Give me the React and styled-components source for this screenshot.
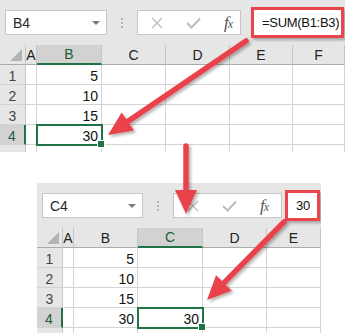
import React from "react";
import styled, { createGlobalStyle } from "styled-components";

const GREEN = "#217346";
const RED = "#e9434b";

const GlobalStyle = createGlobalStyle`
  html, body { margin: 0; padding: 0; background: #fff; }
  body { font-family: "Liberation Sans", Arial, sans-serif; }
  * { box-sizing: border-box; }
`;

const Canvas = styled.div`
  position: relative;
  width: 345px;
  height: 333px;
  overflow: hidden;
  background: #fff;
  display: flex;
  flex-direction: column;
`;

const Sheet = styled.div`
  flex-shrink: 0;
  width: ${p => p.$width}px;
  height: ${p => p.$height}px;
  margin-left: ${p => p.$left || 0}px;
  margin-top: ${p => p.$top || 0}px;
  background: #e6e6e6;
  overflow: hidden;
`;

const FormulaBar = styled.div`
  display: flex;
  align-items: center;
  height: 45px;
  padding-left: 5px;
`;

const NameBox = styled.div`
  display: flex;
  align-items: center;
  justify-content: space-between;
  width: ${p => p.$width}px;
  height: 25px;
  padding: 0 6px 0 7px;
  background: #fff;
  border: 1px solid #c6c6c6;
  font-size: 14px;
  color: #262626;
`;

const Caret = styled.span`
  width: 0;
  height: 0;
  border-left: 4px solid transparent;
  border-right: 4px solid transparent;
  border-top: 4px solid #7a7a7a;
`;

const Dots = styled.div`
  display: flex;
  flex-direction: column;
  gap: 2px;
  margin-left: 14px;
  span {
    width: 2px;
    height: 2px;
    background: #b3b3b3;
  }
`;

const FxBox = styled.div`
  display: flex;
  align-items: center;
  gap: 23px;
  width: ${p => p.$width}px;
  height: 25px;
  margin-left: 14px;
  padding-left: 13px;
  background: #fff;
  border: 1px solid #c6c6c6;
`;

const Fx = styled.span`
  font-family: "Liberation Serif", "Times New Roman", serif;
  font-style: italic;
  font-size: 17px;
  line-height: 1;
  color: #555;
  letter-spacing: -1px;
  small { font-size: 12px; }
`;

const Callout = styled.div`
  display: flex;
  align-items: center;
  width: ${p => p.$width}px;
  height: 31px;
  margin-left: ${p => p.$gap}px;
  padding-left: 8px;
  background: #fff;
  border: 3px solid ${RED};
  box-shadow: 2px 2px 3px rgba(0, 0, 0, 0.3);
  font-size: 13px;
  letter-spacing: -0.3px;
  color: #111;
  white-space: nowrap;
`;

const Grid = styled.div`
  display: grid;
  grid-template-columns: ${p => p.$cols};
  grid-auto-rows: 20px;
  background: #fff;
  font-size: 14px;
`;

const Corner = styled.div`
  position: relative;
  background: #e6e6e6;
  border-right: 1px solid #c6c6c6;
  border-bottom: 1px solid #ababab;
  &::after {
    content: "";
    position: absolute;
    right: 3px;
    bottom: 3px;
    border-style: solid;
    border-width: 0 0 12px 12px;
    border-color: transparent transparent #b4b4b4 transparent;
  }
`;

const ColHead = styled.div`
  display: flex;
  align-items: center;
  justify-content: center;
  background: ${p => (p.$active ? "#d2d2d2" : "#e6e6e6")};
  border-right: 1px solid #c6c6c6;
  border-bottom: ${p => (p.$active ? `2px solid ${GREEN}` : "1px solid #ababab")};
  color: ${p => (p.$active ? "#1d5e3a" : "#222")};
  white-space: nowrap;
`;

const RowHead = styled.div`
  display: flex;
  align-items: flex-end;
  justify-content: center;
  line-height: 1;
  padding-bottom: 1px;
  background: ${p => (p.$active ? "#d2d2d2" : "#e6e6e6")};
  border-right: ${p => (p.$active ? `2px solid ${GREEN}` : "1px solid #c6c6c6")};
  border-bottom: 1px solid #d4d4d4;
  color: ${p => (p.$active ? "#1d5e3a" : "#444")};
`;

const Cell = styled.div`
  position: relative;
  display: flex;
  align-items: flex-end;
  justify-content: flex-end;
  line-height: 1;
  padding: 0 3px 1px 0;
  border-right: 1px solid #d4d4d4;
  border-bottom: 1px solid #d4d4d4;
  color: #111;
  ${p =>
    p.$selected &&
    `
    z-index: 1;
    outline: 2px solid ${GREEN};
    outline-offset: -1px;
    &::after {
      content: "";
      position: absolute;
      right: -4px;
      bottom: -4px;
      width: 6px;
      height: 6px;
      background: ${GREEN};
      border: 1px solid #fff;
    }
  `}
`;

const Overlay = styled.svg`
  position: absolute;
  left: 0;
  top: 0;
  pointer-events: none;
`;

const XIcon = () => (
  <svg width="12" height="12" viewBox="0 0 12 12">
    <path d="M1 1 L11 11 M11 1 L1 11" stroke="#bdbdbd" strokeWidth="1.3" fill="none" />
  </svg>
);

const CheckIcon = () => (
  <svg width="15" height="12" viewBox="0 0 15 12">
    <path d="M1 6 L5.5 10.5 L14 1.5" stroke="#bdbdbd" strokeWidth="2" fill="none" />
  </svg>
);

function Arrow({ x1, y1, x2, y2 }) {
  const dx = x2 - x1;
  const dy = y2 - y1;
  const len = Math.hypot(dx, dy);
  const ux = dx / len;
  const uy = dy / len;
  const head = 24;
  const half = 11;
  const bx = x2 - ux * head;
  const by = y2 - uy * head;
  const px = -uy;
  const py = ux;
  const pts = [
    [x2, y2],
    [bx + px * half, by + py * half],
    [bx - px * half, by - py * half],
  ]
    .map(p => p.join(","))
    .join(" ");
  return (
    <g filter="url(#shadow)">
      <line x1={x1} y1={y1} x2={bx + ux * 2} y2={by + uy * 2} stroke={RED} strokeWidth="5.5" strokeLinecap="round" />
      <polygon points={pts} fill={RED} />
    </g>
  );
}

// the last row is only partly on screen, so it gets no label
function Spreadsheet({ widths, letters, rows, sel, name, nameWidth, fxWidth, gap, calloutWidth, formula }) {
  return (
    <>
      <FormulaBar>
        <NameBox $width={nameWidth}>
          {name}
          <Caret />
        </NameBox>
        <Dots>
          <span />
          <span />
          <span />
        </Dots>
        <FxBox $width={fxWidth}>
          <XIcon />
          <CheckIcon />
          <Fx>
            f<small>x</small>
          </Fx>
        </FxBox>
        <Callout $gap={gap} $width={calloutWidth}>
          {formula}
        </Callout>
      </FormulaBar>
      <Grid $cols={widths.map(w => w + "px").join(" ")}>
        <Corner />
        {letters.map(l => (
          <ColHead key={l} $active={l === sel.col}>
            {l}
          </ColHead>
        ))}
        {rows.map((r, i) => (
          <React.Fragment key={i}>
            <RowHead $active={i + 1 === sel.row}>{i < rows.length - 1 ? i + 1 : ""}</RowHead>
            {letters.map(l => (
              <Cell key={l} $selected={l === sel.col && i + 1 === sel.row}>
                {r[l]}
              </Cell>
            ))}
          </React.Fragment>
        ))}
      </Grid>
    </>
  );
}

export default function App() {
  return (
    <Canvas>
      <GlobalStyle />
      <Sheet $width={345} $height={152}>
        <Spreadsheet
          widths={[26, 11, 65, 64, 64, 63, 52]}
          letters={["A", "B", "C", "D", "E", "F"]}
          rows={[{ B: 5 }, { B: 10 }, { B: 15 }, { B: 30 }, {}]}
          sel={{ col: "B", row: 4 }}
          name="B4"
          nameWidth={102}
          fxWidth={104}
          gap={10}
          calloutWidth={93}
          formula="=SUM(B1:B3)"
        />
      </Sheet>
      <Sheet $width={284} $height={150} $left={37} $top={31}>
        <Spreadsheet
          widths={[26, 11, 64, 65, 64, 54]}
          letters={["A", "B", "C", "D", "E"]}
          rows={[{ B: 5 }, { B: 10 }, { B: 15 }, { B: 30, C: 30 }, {}]}
          sel={{ col: "C", row: 4 }}
          name="C4"
          nameWidth={101}
          fxWidth={109}
          gap={3}
          calloutWidth={35}
          formula="30"
        />
      </Sheet>
      <Overlay width="345" height="333" viewBox="0 0 345 333">
        <defs>
          <filter id="shadow" x="-20%" y="-20%" width="140%" height="140%">
            <feDropShadow dx="2" dy="2" stdDeviation="1.5" floodColor="#000" floodOpacity="0.3" />
          </filter>
        </defs>
        <Arrow x1={246} y1={41} x2={108} y2={135} />
        <Arrow x1={186} y1={146} x2={186} y2={214} />
        <Arrow x1={284} y1={222} x2={207} y2={300} />
      </Overlay>
    </Canvas>
  );
}
